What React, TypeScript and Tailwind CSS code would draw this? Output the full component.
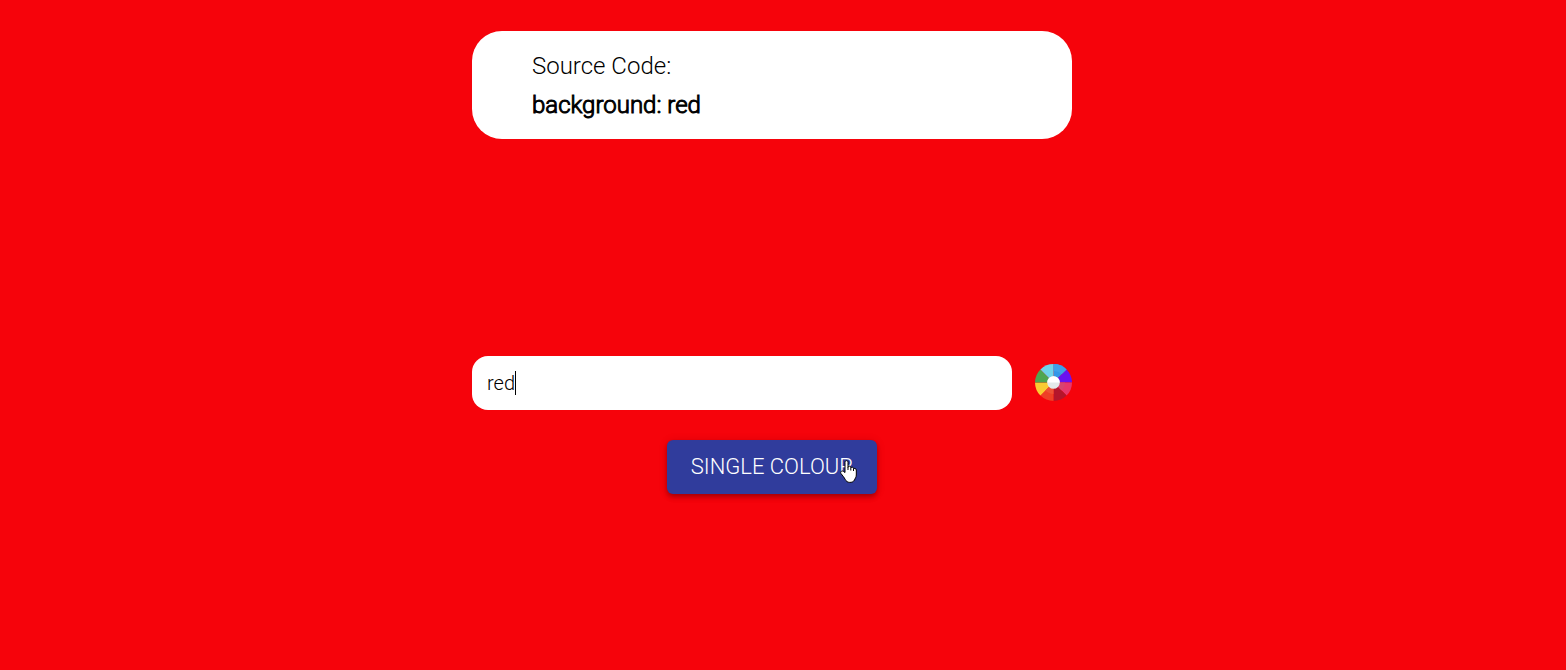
import { useState } from "react";

const SLICES = ["#3296e8", "#6a12f0", "#e8376b", "#b5152b", "#ef3f26", "#fbcb33", "#4fa650", "#6fd3ea"];

function slicePath(index: number) {
  const point = (turn: number) => {
    const angle = (turn * Math.PI) / 4 - Math.PI / 2;
    return `${50 + 50 * Math.cos(angle)} ${50 + 50 * Math.sin(angle)}`;
  };
  return `M50 50 L${point(index)} A50 50 0 0 1 ${point(index + 1)} Z`;
}

function ColourWheel() {
  return (
    <svg viewBox="0 0 100 100" className="size-[37px]" aria-hidden="true">
      {SLICES.map((fill, i) => (
        <path key={fill} d={slicePath(i)} fill={fill} />
      ))}
      <path d="M50 0 A50 50 0 0 1 85.4 14.6 L72 28 A31 31 0 0 0 50 19 Z" fill="#3fa0ea" />
      <path d="M50 50 L81 50 A31 31 0 0 1 71.9 71.9 Z" fill="#d84470" />
      <path d="M50 50 L28.1 71.9 A31 31 0 0 0 50 81 Z" fill="#ee5136" />
      <circle cx="50" cy="50" r="17" fill="#e3eaea" />
      <path d="M33 50 A17 17 0 0 1 67 50 Z" fill="#ffffff" />
    </svg>
  );
}

function HandPointer() {
  return (
    <svg viewBox="0 0 17 23" className="pointer-events-none absolute top-5 right-5 h-[23px] w-[17px]" aria-hidden="true">
      <path
        d="M5 12.5V2.2C5 .1 8 .1 8 2.2V7.3C8.3 5.7 10.7 5.8 10.8 7.4V8C11.2 6.7 13.4 6.9 13.5 8.4V9C14 8 16.3 8.2 16.3 10V15C16.3 17.3 15 18.4 14.5 20C13.6 21.8 11.8 22.4 9.8 22.4C7.4 22.4 6.1 21.2 5.3 19.5C4.3 17.5 2.6 15.6 1 13.6C-.2 11.7 2.2 10.2 3.6 11.5Z"
        fill="#fff"
        stroke="#000"
        strokeWidth="1"
        strokeLinejoin="round"
      />
      <path d="M8 7V10M10.8 8V10.5M13.5 9V11" fill="none" stroke="#000" strokeWidth="1" />
    </svg>
  );
}

export default function App() {
  const [colour, setColour] = useState("red");
  return (
    <div className="min-h-screen bg-[#f6030b] pt-[31px] pr-[22px] font-['Roboto',sans-serif] font-light text-black">
      <main className="mx-auto flex max-w-[600px] flex-col items-center">
        <section className="w-full rounded-[30px] bg-white px-[60px] pt-[15px] pb-[14px] text-2xl">
          <h1 className="leading-10">Source Code:</h1>
          <p className="leading-[39px] [-webkit-text-stroke:1px_black]">background: {colour}</p>
        </section>
        <div className="mt-[217px] flex w-full items-center justify-between gap-[23px]">
          <div className="relative flex-1">
            <input
              aria-label="Colour"
              value={colour}
              onChange={(e) => setColour(e.target.value)}
              className="peer h-[54px] w-full rounded-2xl bg-white px-[15px] text-xl outline-none"
            />
            <div className="pointer-events-none absolute inset-y-0 left-[15px] flex items-center text-xl peer-focus:hidden" aria-hidden="true">
              <span className="invisible">{colour}</span>
              <span className="h-6 w-px bg-black" />
            </div>
          </div>
          <button type="button" aria-label="Pick a colour" className="flex h-[38px] w-[37px] items-start rounded-full">
            <ColourWheel />
          </button>
        </div>
        <button
          type="button"
          className="relative mt-[30px] h-[54px] w-[210px] rounded-md bg-[#303c9c] pb-0.5 text-[22px] text-white shadow-[0_2px_4px_-1px_rgba(0,0,0,0.2),0_4px_5px_0_rgba(0,0,0,0.14),0_1px_10px_0_rgba(0,0,0,0.12)]"
        >
          SINGLE COLOUR
          <HandPointer />
        </button>
      </main>
    </div>
  );
}
